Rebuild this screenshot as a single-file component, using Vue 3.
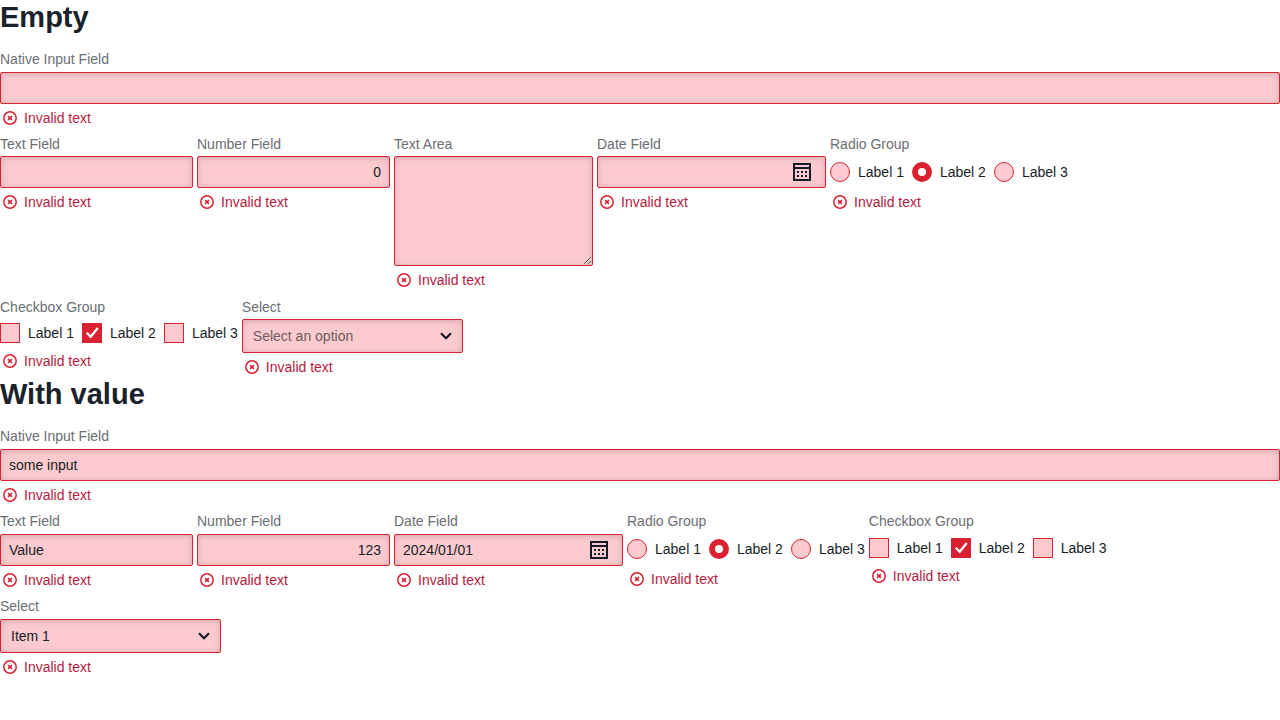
<script setup>
import { h } from 'vue'

const choices = ['Label 1', 'Label 2', 'Label 3']

const sections = [
  {
    id: 'empty',
    title: 'Empty',
    native: '',
    fields: [
      { type: 'text', label: 'Text Field', value: '' },
      { type: 'number', label: 'Number Field', value: '0' },
      { type: 'area', label: 'Text Area', value: '' },
      { type: 'date', label: 'Date Field', value: '' },
      { type: 'radio', label: 'Radio Group' },
      { type: 'checkbox', label: 'Checkbox Group' },
      { type: 'select', label: 'Select', value: '' }
    ]
  },
  {
    id: 'filled',
    title: 'With value',
    native: 'some input',
    fields: [
      { type: 'text', label: 'Text Field', value: 'Value' },
      { type: 'number', label: 'Number Field', value: '123' },
      { type: 'date', label: 'Date Field', value: '2024/01/01' },
      { type: 'radio', label: 'Radio Group' },
      { type: 'checkbox', label: 'Checkbox Group' },
      { type: 'select', label: 'Select', value: 'Item 1' }
    ]
  }
]

const isGroup = (field) => field.type === 'radio' || field.type === 'checkbox'

const InvalidText = () =>
  h('p', { class: 'helper' }, [
    h('svg', { viewBox: '0 0 14 14', 'aria-hidden': 'true' }, [
      h('circle', { cx: 7, cy: 7, r: 6.2 }),
      h('path', { d: 'M5.1 5.1l3.8 3.8M8.9 5.1L5.1 8.9' })
    ]),
    h('span', 'Invalid text')
  ])
</script>

<template>
  <main>
    <section v-for="s in sections" :key="s.id" :class="['section', s.id]">
      <h1>{{ s.title }}</h1>

      <div class="field native">
        <label class="caption" :for="s.id + '-native'">Native Input Field</label>
        <input :id="s.id + '-native'" class="box" type="text" :value="s.native" aria-invalid="true" />
        <InvalidText />
      </div>

      <div class="fields">
        <div
          v-for="f in s.fields"
          :key="f.type"
          :class="['field', f.type]"
          :role="isGroup(f) ? 'group' : null"
          :aria-labelledby="isGroup(f) ? s.id + '-' + f.type + '-caption' : null"
        >
          <span v-if="isGroup(f)" :id="s.id + '-' + f.type + '-caption'" class="caption">{{ f.label }}</span>
          <label v-else class="caption" :for="s.id + '-' + f.type">{{ f.label }}</label>

          <div v-if="isGroup(f)" class="choices">
            <label v-for="c in choices" :key="c" class="choice">
              <span class="mark">
                <input :type="f.type" :name="s.id + '-' + f.type" :checked="c === 'Label 2'" />
                <svg v-if="f.type === 'checkbox' && c === 'Label 2'" viewBox="0 0 20 20" aria-hidden="true">
                  <path d="M4.8 9.8l3.9 4L15.8 5" />
                </svg>
              </span>
              <span>{{ c }}</span>
            </label>
          </div>

          <textarea v-else-if="f.type === 'area'" :id="s.id + '-area'" class="box" aria-invalid="true"></textarea>

          <div v-else-if="f.type === 'date'" class="wrap">
            <input :id="s.id + '-date'" class="box" type="text" :value="f.value" aria-invalid="true" />
            <button type="button" aria-label="Open calendar">
              <svg viewBox="0 0 18 18" aria-hidden="true">
                <path fill-rule="evenodd" d="M0 0h18v18H0zM2 2v2h14V2zM2 6v10h14V6z" />
                <path d="M4 8h2v2H4zM8 8h2v2H8zM12 8h2v2h-2zM4 12h2v2H4zM8 12h2v2H8zM12 12h2v2h-2z" />
              </svg>
            </button>
          </div>

          <div v-else-if="f.type === 'select'" class="wrap">
            <select :id="s.id + '-select'" :class="['box', { placeholder: !f.value }]" aria-invalid="true">
              <option v-if="!f.value" value="">Select an option</option>
              <option>Item 1</option>
            </select>
            <svg class="chevron" viewBox="0 0 12 8" aria-hidden="true">
              <path d="M1 1.2l5 5 5-5" />
            </svg>
          </div>

          <input v-else :id="s.id + '-' + f.type" class="box" :type="f.type" :value="f.value" aria-invalid="true" />

          <InvalidText />
        </div>
      </div>
    </section>
  </main>
</template>

<style scoped>
main {
  --red: #da2131;
  --pink: #fdcbcf;
  --ink: #161d26;
  font: 14px/20px "Liberation Sans", Arial, sans-serif;
  color: var(--ink);
}
.section {
  --caption-gap: 3px;
  --row-gap: 6px;
}
.section.empty {
  --caption-gap: 2px;
  --row-gap: 7px;
}
h1 {
  margin: 0 0 14px;
  font-size: 29px;
  line-height: 35px;
  font-weight: 700;
  color: #19222b;
}
.native {
  --caption-gap: 3px;
  margin-bottom: 6px;
}
.fields {
  display: flex;
  flex-wrap: wrap;
  align-items: flex-start;
  gap: var(--row-gap) 4px;
}
.field {
  display: flex;
  flex-direction: column;
}
.text,
.number {
  width: 193px;
}
.area {
  width: 199px;
}
.date {
  width: 229px;
}
.select {
  width: 221px;
}
.caption {
  color: #6a6e75;
  margin-bottom: var(--caption-gap);
}
.box {
  display: block;
  box-sizing: border-box;
  width: 100%;
  height: 32px;
  margin: 0;
  padding: 0 8px;
  border: 1px solid var(--red);
  border-radius: 2px;
  outline: 0;
  background: var(--pink);
  box-shadow: inset 0 1px 6px rgba(60, 60, 70, 0.24);
  color: var(--ink);
  font: inherit;
  appearance: none;
}
.number .box {
  text-align: right;
  appearance: textfield;
}
.number .box::-webkit-inner-spin-button {
  appearance: none;
  margin: 0;
}
textarea.box {
  height: 110px;
  padding: 5px 8px;
  resize: both;
}
.wrap {
  position: relative;
}
.date .box {
  padding-right: 40px;
}
.date button {
  position: absolute;
  top: 7px;
  right: 15px;
  width: 18px;
  height: 18px;
  padding: 0;
  border: 0;
  background: none;
}
.date button svg {
  display: block;
  width: 18px;
  height: 18px;
  fill: #141a26;
}
select.box {
  height: 34px;
  padding: 0 32px 0 10px;
}
select.placeholder {
  color: #6c5c62;
}
.chevron {
  position: absolute;
  top: 13px;
  right: 11px;
  width: 12px;
  height: 8px;
  fill: none;
  stroke: #141a26;
  stroke-width: 2.2;
  pointer-events: none;
}
.choices {
  display: flex;
  gap: 8px;
  padding: 4px 0;
}
.radio {
  --caption-gap: 2px;
}
.radio .choices {
  padding: 6px 0;
}
.choice {
  display: flex;
  gap: 8px;
}
.mark {
  position: relative;
  width: 20px;
  height: 20px;
}
.mark input {
  display: block;
  box-sizing: border-box;
  width: 20px;
  height: 20px;
  margin: 0;
  border: 1px solid var(--red);
  background: var(--pink);
  appearance: none;
}
.radio input {
  border-radius: 50%;
}
.radio input:checked {
  border-width: 6px;
  background: #fff;
}
.checkbox input:checked {
  background: var(--red);
}
.mark svg {
  position: absolute;
  inset: 0;
  fill: none;
  stroke: #fff;
  stroke-width: 2.3;
  pointer-events: none;
}
:deep(.helper) {
  display: flex;
  align-items: center;
  gap: 7px;
  margin: 4px 0 0;
  padding-left: 3px;
  color: #b71a40;
}
:deep(.helper svg) {
  width: 14px;
  height: 14px;
  fill: none;
  stroke: var(--red);
  stroke-width: 1.5;
}
</style>

<style>
body {
  background: #fff;
}
</style>
